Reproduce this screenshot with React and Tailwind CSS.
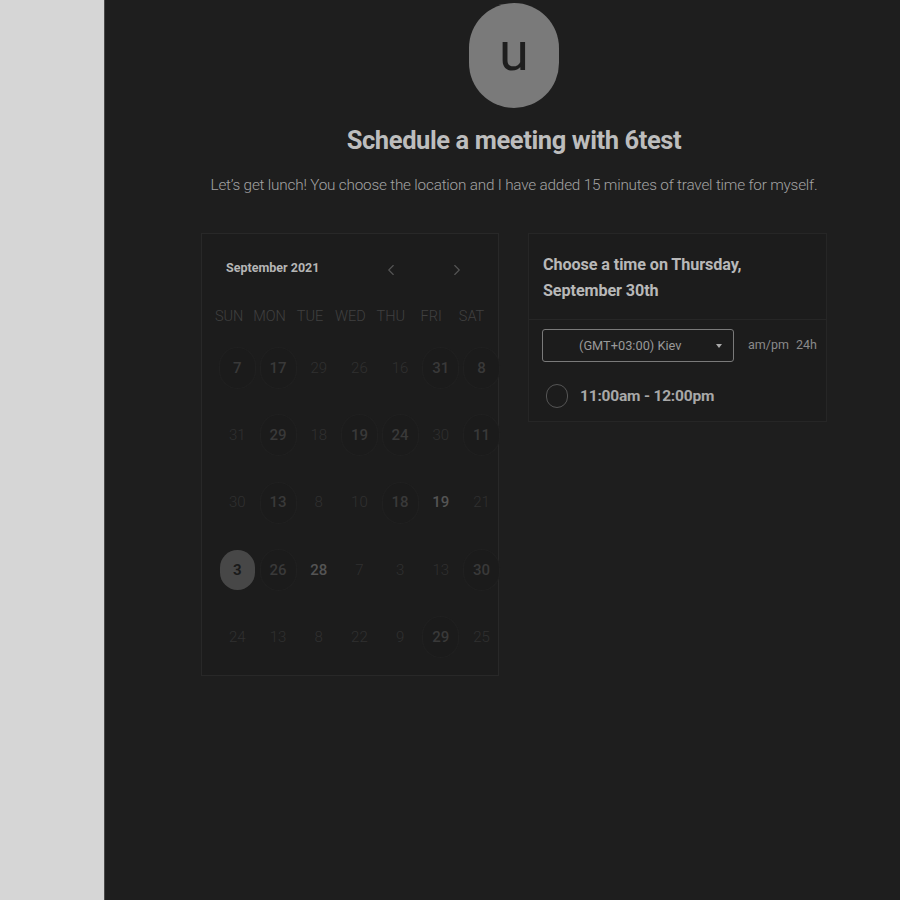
import { ChevronLeft, ChevronRight } from 'lucide-react'

// day cells: [label, kind] kind: 0 faded, 1 available (circle), 2 bright no circle, 3 selected
const weeks = [
  [['7', 1], ['17', 1], ['29', 0], ['26', 0], ['16', 0], ['31', 1], ['8', 1]],
  [['31', 0], ['29', 1], ['18', 0], ['19', 1], ['24', 1], ['30', 0], ['11', 1]],
  [['30', 0], ['13', 1], ['8', 0], ['10', 0], ['18', 1], ['19', 2], ['21', 0]],
  [['3', 3], ['26', 1], ['28', 2], ['7', 0], ['3', 0], ['13', 0], ['30', 1]],
  [['24', 0], ['13', 0], ['8', 0], ['22', 0], ['9', 0], ['29', 1], ['25', 0]],
]

const dayNames = ['SUN', 'MON', 'TUE', 'WED', 'THU', 'FRI', 'SAT']

function Day({ label, kind }) {
  if (kind === 3) {
    return (
      <div className="w-[35px] h-10 rounded-full bg-[#474747] flex items-center justify-center text-[15px] font-bold text-[#1a1a1a]">
        {label}
      </div>
    )
  }
  if (kind === 1) {
    return (
      <div className="w-[35px] h-10 rounded-full bg-[#1b1b1b] shadow-[0_0_0_1px_#202020] flex items-center justify-center text-[15px] font-medium text-[#393939]">
        {label}
      </div>
    )
  }
  return (
    <div
      className={
        'w-[35px] h-10 flex items-center justify-center text-[15px] ' +
        (kind === 2 ? 'font-medium text-[#545454]' : 'font-light text-[#303030]')
      }
    >
      {label}
    </div>
  )
}

export default function App() {
  return (
    <div className="flex h-[900px] w-[900px] overflow-hidden" style={{ fontFamily: "Roboto, 'Liberation Sans', sans-serif" }}>
      <aside className="w-[105px] shrink-0 bg-[#d6d6d6] border-r border-[#4a4a4a]" />

      <main className="flex-1 bg-[#1e1e1e] pl-[96px]">
        <div className="w-[626px] flex flex-col items-center">
          <div className="mt-[3px] w-[90px] h-[105px] rounded-full bg-[#7a7a7a] flex items-center justify-center text-[54px] leading-none text-[#1e1e1e] pb-2">
            u
          </div>
          <h1 className="mt-[13px] text-[25.5px] font-bold tracking-[-0.4px] text-[#bdbdbd]">
            Schedule a meeting with 6test
          </h1>
          <p className="mt-[15px] text-[15.3px] font-light tracking-[-0.2px] text-[#a3a3a3]">
            Let’s get lunch! You choose the location and I have added 15 minutes of travel time for myself.
          </p>

          <div className="mt-[36px] w-full flex gap-[29px] items-start">
            {/* calendar */}
            <div className="w-[298px] h-[443px] shrink-0 border border-[#282828] bg-[#1c1c1c] pt-[23px]">
              <div className="flex items-center pl-[24px] pr-[32px]">
                <span className="text-[12.5px] font-bold text-[#b5b5b5]">September 2021</span>
                <div className="ml-auto flex items-center gap-[48px] text-[#555] pt-1">
                  <ChevronLeft size={18} strokeWidth={1.5} />
                  <ChevronRight size={18} strokeWidth={1.5} />
                </div>
              </div>
              <div className="mt-[27px] ml-[7px] grid grid-cols-[repeat(7,40.4px)] justify-items-center text-[14.5px] font-light text-[#404040]">
                {dayNames.map((d) => (
                  <span key={d}>{d}</span>
                ))}
              </div>
              <div className="mt-[20px] ml-[15px] flex flex-col gap-[27.3px]">
                {weeks.map((w, i) => (
                  <div key={i} className="grid grid-cols-[repeat(7,40.7px)] justify-items-center">
                    {w.map(([l, k], j) => (
                      <Day key={j} label={l} kind={k} />
                    ))}
                  </div>
                ))}
              </div>
            </div>

            {/* times */}
            <div className="w-[299px] shrink-0 border border-[#262626] bg-[#1c1c1c]">
              <div className="px-[14px] pt-[18px] pb-[15px] border-b border-[#262626] text-[16.2px] font-bold leading-[26px] text-[#b8b8b8] tracking-[-0.1px]">
                Choose a time on Thursday,
                <br />
                September 30th
              </div>
              <div className="px-[13px] pt-[9px] pb-[13px]">
                <div className="flex items-center">
                  <div className="w-[192px] h-[33px] shrink-0 border border-[#7a7a7a] rounded-[3px] flex items-center pl-[36px] pr-[11px] text-[12.8px] text-[#999]">
                    <span>(GMT+03:00) Kiev</span>
                    <span className="ml-auto w-0 h-0 border-l-[3px] border-r-[3px] border-t-[4px] border-l-transparent border-r-transparent border-t-[#aaa]" />
                  </div>
                  <span className="ml-[14px] text-[12.5px] text-[#8a8a8a] whitespace-nowrap">am/pm</span>
                  <span className="ml-[7px] text-[12.5px] text-[#8a8a8a]">24h</span>
                </div>
                <div className="mt-[22px] flex items-center">
                  <span className="ml-[4px] w-[22px] h-[24px] rounded-full border-[1.5px] border-[#555]" />
                  <span className="ml-[12px] text-[15.5px] font-bold text-[#a8a8a8] tracking-[-0.2px]">
                    11:00am - 12:00pm
                  </span>
                </div>
              </div>
            </div>
          </div>
        </div>
      </main>
    </div>
  )
}
